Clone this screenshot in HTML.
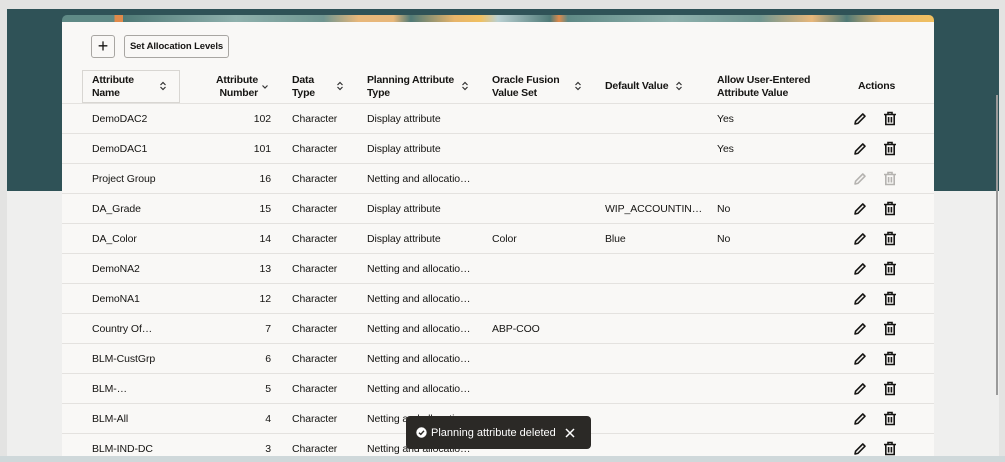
<!DOCTYPE html><html><head><style>
*{margin:0;padding:0;box-sizing:border-box}
body{width:1005px;height:462px;overflow:hidden;background:#e3e3e2;font-family:"Liberation Sans",sans-serif;color:#161513;position:relative}
.teal{position:absolute;left:7px;top:9px;width:992px;height:182px;background:#2f5257}
.gray{position:absolute;left:7px;top:191px;width:992px;height:265px;background:#efefee}
.bot{position:absolute;left:0;top:456px;width:1005px;height:6px;background:#cfd8da}
.sb{position:absolute;left:996px;top:95px;width:2px;height:300px;background:#9a9a9a}
.strip{position:absolute;left:62px;top:15px;width:872px;height:8px;border-radius:5px 5px 0 0;background:linear-gradient(90deg,#5f8a86 0,#5f8a86 6%,#e08a4a 6%,#e08a4a 7%,#4f7a77 7%,#8fb1ad 20%,#6f9691 30%,#e8b77a 34%,#e8b77a 38%,#4f7a77 40%,#e7b46a 45%,#f0c060 48%,#b9d0d2 50%,#4f7a77 56%,#e08a4a 57%,#5f8a86 58%,#8fb1ad 70%,#6f9691 80%,#e8b77a 86%,#4f7a77 90%,#e7b46a 94%,#f0c060 100%)}
.card{position:absolute;left:62px;top:22px;width:872px;height:434px;background:#f9f8f6}
.btn{position:absolute;border:1px solid #a8a6a2;border-radius:3px;background:#f9f8f6;font-size:9.5px;font-weight:bold;display:flex;align-items:center;justify-content:center;letter-spacing:-0.1px}
.h{position:absolute;font-size:10.5px;font-weight:bold;line-height:12.5px;letter-spacing:-0.2px}
.t{position:absolute;font-size:10.5px;line-height:12px;white-space:nowrap;letter-spacing:-0.1px}
.line{position:absolute;left:62px;width:872px;height:1px;background:#e4e2df}
.toast{position:absolute;left:406px;top:416px;width:185px;height:33px;background:#2b2926;border-radius:4px;color:#fff;font-size:11px}
</style></head><body>
<div class="teal"></div><div class="gray"></div><div class="bot"></div><div class="sb"></div>
<div class="strip"></div><div class="card"></div>
<div class="btn" style="left:91px;top:35px;width:24px;height:23px;font-size:18px;font-weight:normal">+</div>
<div class="btn" style="left:124px;top:35px;width:105px;height:23px">Set Allocation Levels</div>
<div style="position:absolute;left:82px;top:70px;width:98px;height:33px;border:1px solid #d8d6d2"></div>
<div class="h" style="left:92px;top:74px">Attribute<br>Name</div><svg style="position:absolute;left:159px;top:81px" width="8" height="10" viewBox="0 0 8 10"><path d="M1.5 4 4 1.5 6.5 4M1.5 6 4 8.5 6.5 6" fill="none" stroke="#333" stroke-width="1.2"/></svg>
<div class="h" style="right:747px;top:74px;text-align:right">Attribute<br>Number</div><svg style="position:absolute;left:261px;top:84px" width="8" height="6" viewBox="0 0 8 6"><path d="M1.5 1.5 4 4 6.5 1.5" fill="none" stroke="#333" stroke-width="1.2"/></svg>
<div class="h" style="left:292px;top:74px">Data<br>Type</div><svg style="position:absolute;left:336px;top:81px" width="8" height="10" viewBox="0 0 8 10"><path d="M1.5 4 4 1.5 6.5 4M1.5 6 4 8.5 6.5 6" fill="none" stroke="#333" stroke-width="1.2"/></svg>
<div class="h" style="left:367px;top:74px">Planning Attribute<br>Type</div><svg style="position:absolute;left:461px;top:81px" width="8" height="10" viewBox="0 0 8 10"><path d="M1.5 4 4 1.5 6.5 4M1.5 6 4 8.5 6.5 6" fill="none" stroke="#333" stroke-width="1.2"/></svg>
<div class="h" style="left:492px;top:74px">Oracle Fusion<br>Value Set</div><svg style="position:absolute;left:574px;top:81px" width="8" height="10" viewBox="0 0 8 10"><path d="M1.5 4 4 1.5 6.5 4M1.5 6 4 8.5 6.5 6" fill="none" stroke="#333" stroke-width="1.2"/></svg>
<div class="h" style="left:605px;top:80px">Default Value</div><svg style="position:absolute;left:675px;top:81px" width="8" height="10" viewBox="0 0 8 10"><path d="M1.5 4 4 1.5 6.5 4M1.5 6 4 8.5 6.5 6" fill="none" stroke="#333" stroke-width="1.2"/></svg>
<div class="h" style="left:717px;top:74px">Allow User-Entered<br>Attribute Value</div>
<div class="h" style="left:858px;top:80px">Actions</div>
<div id="rows"></div>
<div class="toast"><svg style="position:absolute;left:10px;top:11px" width="11" height="11" viewBox="0 0 11 11"><circle cx="5.5" cy="5.5" r="5.2" fill="#fff"/><path d="M3 5.7 4.8 7.4 8 3.8" fill="none" stroke="#2b2926" stroke-width="1.4"/></svg><span style="position:absolute;left:25px;top:11px">Planning attribute deleted</span><svg style="position:absolute;left:159px;top:12px" width="10" height="10" viewBox="0 0 10 10"><path d="M1 1 9 9M9 1 1 9" stroke="#fff" stroke-width="1.5"/></svg></div>
<script>
var d=[["DemoDAC2","102","Character","Display attribute","","","Yes"],["DemoDAC1","101","Character","Display attribute","","","Yes"],["Project Group","16","Character","Netting and allocatio…","","",""],["DA_Grade","15","Character","Display attribute","","WIP_ACCOUNTIN…","No"],["DA_Color","14","Character","Display attribute","Color","Blue","No"],["DemoNA2","13","Character","Netting and allocatio…","","",""],["DemoNA1","12","Character","Netting and allocatio…","","",""],["Country Of…","7","Character","Netting and allocatio…","ABP-COO","",""],["BLM-CustGrp","6","Character","Netting and allocatio…","","",""],["BLM-…","5","Character","Netting and allocatio…","","",""],["BLM-All","4","Character","Netting and allocatio…","","",""],["BLM-IND-DC","3","Character","Netting and allocatio…","","",""]];
var h='',xs=[92,0,292,367,492,605,717];
for(var i=0;i<d.length;i++){var y=103+i*30;h+='<div class="line" style="top:'+y+'px"></div>';var ty=y+10;
for(var j=0;j<7;j++){if(!d[i][j])continue;if(j==1)h+='<div class="t" style="right:'+(1005-271)+'px;top:'+ty+'px">'+d[i][j]+'</div>';else h+='<div class="t" style="left:'+xs[j]+'px;top:'+ty+'px">'+d[i][j]+'</div>';}
var c=i==2?'#b5b3b0':'#161513';
h+='<svg style="position:absolute;left:853px;top:'+(y+9)+'px" width="14" height="14" viewBox="0 0 14 14"><path d="M2 12 2.6 9.2 9.8 2 12 4.2 4.8 11.4Z" fill="none" stroke="'+c+'" stroke-width="1.6" stroke-linejoin="round"/></svg>';
h+='<svg style="position:absolute;left:883px;top:'+(y+8)+'px" width="14" height="15" viewBox="0 0 14 15"><path d="M1 3.5H13M5 3.5V1.5H9V3.5M2.8 3.5V13.5H11.2V3.5M5.6 6V11.5M8.4 6V11.5" fill="none" stroke="'+c+'" stroke-width="1.6"/></svg>';}
document.getElementById('rows').innerHTML=h;
</script>
</body></html>
